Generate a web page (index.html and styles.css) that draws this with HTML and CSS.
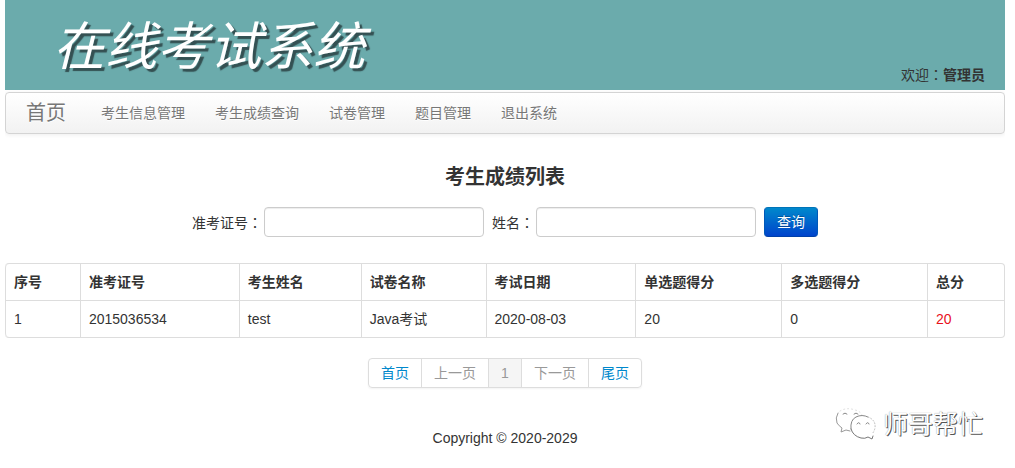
FILE: index.html
```html
<!DOCTYPE html>
<html lang="zh-CN">
<head>
<meta charset="utf-8">
<title>在线考试系统</title>
<link rel="stylesheet" href="styles.css">
</head>
<body>
<header class="banner">
  <h1 class="banner-title">在线考试系统</h1>
  <p class="welcome">欢迎<span class="colon" lang="zh-TW">：</span><strong>管理员</strong></p>
</header>
<nav class="navbar">
  <a class="brand" href="#">首页</a>
  <a class="nav-link" href="#">考生信息管理</a>
  <a class="nav-link" href="#">考生成绩查询</a>
  <a class="nav-link" href="#">试卷管理</a>
  <a class="nav-link" href="#">题目管理</a>
  <a class="nav-link" href="#">退出系统</a>
</nav>
<main>
  <h2 class="page-title">考生成绩列表</h2>
  <form class="search">
    <div class="field">
      <label for="ticket">准考证号<span class="colon" lang="zh-TW">：</span></label>
      <input class="text-input" id="ticket" type="text">
    </div>
    <div class="field">
      <label for="name">姓名<span class="colon" lang="zh-TW">：</span></label>
      <input class="text-input" id="name" type="text">
    </div>
    <button class="btn" type="button">查询</button>
  </form>
  <table class="scores">
    <colgroup>
      <col class="col-index"><col class="col-ticket"><col class="col-name"><col class="col-paper"><col class="col-date"><col class="col-part"><col class="col-part"><col class="col-total">
    </colgroup>
    <thead>
      <tr><th>序号</th><th>准考证号</th><th>考生姓名</th><th>试卷名称</th><th>考试日期</th><th>单选题得分</th><th>多选题得分</th><th>总分</th></tr>
    </thead>
    <tbody>
      <tr><td>1</td><td>2015036534</td><td>test</td><td>Java考试</td><td>2020-08-03</td><td>20</td><td>0</td><td class="total">20</td></tr>
    </tbody>
  </table>
  <nav class="pagination">
    <a class="page" href="#">首页</a>
    <a class="page muted" href="#">上一页</a>
    <a class="page current" href="#">1</a>
    <a class="page muted" href="#">下一页</a>
    <a class="page" href="#">尾页</a>
  </nav>
</main>
<footer class="footer">Copyright © 2020-2029</footer>
<div class="watermark">
  <svg class="wechat" viewBox="0 0 42 32" width="42" height="32" fill="none" stroke-linecap="round">
    <path d="M3 5Q0 10 2 15Q4 18 7 20L6 24L11 22L15 23" stroke="#999"/>
    <path d="M5 3Q12 -1 20 2Q25 3 27 7" stroke="#ddd" stroke-dasharray="1 3"/>
    <path d="M16 21Q15 12 21 9Q27 6 33 9" stroke="#888"/>
    <path d="M33 9Q41 12 40 20Q39 24 37 26" stroke="#bbb" stroke-dasharray="1 2"/>
    <path d="M16 21Q18 28 26 30Q30 31 33 29L37 31L38 28" stroke="#777"/>
    <path d="M8 6Q10 4 12 6M19 6Q21 4 23 6M22 16Q24 13 25 16M31 16Q33 13 34 16" stroke="#888"/>
  </svg>
  <span>师哥帮忙</span>
</div>
</body>
</html>
```
FILE: styles.css
```css
* { box-sizing: border-box; }

body {
  position: relative;
  margin: 0 10px 0 5px;
  background: #fff;
  color: #333;
  font: 14px/20px "Liberation Sans", "Noto Sans CJK SC", sans-serif;
}

a { text-decoration: none; }

.colon { font-family: "Noto Sans CJK TC", sans-serif; }

.banner {
  display: flex;
  justify-content: space-between;
  align-items: flex-end;
  height: 90px;
  padding: 0 20px 5px 48px;
  background: #6babac;
}

.banner-title {
  margin: 0;
  padding-bottom: 8px;
  color: #fff;
  font-size: 52px;
  font-style: italic;
  font-weight: 400;
  line-height: 60px;
  text-shadow: 3px 3px 1px #345052;
}

.welcome { margin: 0; }

.navbar {
  display: flex;
  align-items: center;
  gap: 30px;
  height: 42px;
  margin-top: 2px;
  padding: 0 20px;
  border: 1px solid #d4d4d4;
  border-radius: 4px;
  background: linear-gradient(#fff, #f2f2f2);
  box-shadow: 0 1px 4px rgba(0, 0, 0, 0.07);
}

.brand,
.nav-link {
  color: #777;
  text-shadow: 0 1px 0 #fff;
}

.brand {
  margin-right: 5px;
  font-size: 20px;
}

.page-title {
  margin: 33px 0 20px;
  font-size: 20px;
  line-height: 20px;
  text-align: center;
}

.search {
  display: flex;
  justify-content: center;
  align-items: center;
  gap: 8px;
}

.field {
  display: flex;
  align-items: center;
  gap: 2px;
}

.text-input {
  width: 220px;
  height: 30px;
  padding: 4px 6px;
  border: 1px solid #ccc;
  border-radius: 4px;
  background: #fff;
  color: #555;
  font: inherit;
  box-shadow: inset 0 1px 1px rgba(0, 0, 0, 0.075);
}

.btn {
  height: 30px;
  padding: 4px 12px;
  border: 1px solid;
  border-color: #0074b8 #0058b8 #0040a8;
  border-radius: 4px;
  background: linear-gradient(#08c, #04c);
  color: #fff;
  font: inherit;
  text-shadow: 0 -1px 0 rgba(0, 0, 0, 0.25);
}

.scores {
  width: 100%;
  margin-top: 26px;
  border: 1px solid #ddd;
  border-left: 0;
  border-radius: 4px;
  border-collapse: separate;
  border-spacing: 0;
  table-layout: fixed;
}

.scores th,
.scores td {
  padding: 8px;
  border-left: 1px solid #ddd;
  text-align: left;
}

.scores td { border-top: 1px solid #ddd; }
.scores th:first-child { border-top-left-radius: 4px; }
.scores td:first-child { border-bottom-left-radius: 4px; }
.scores .total { color: #e8101c; }

.col-index { width: 7.5%; }
.col-ticket { width: 15.9%; }
.col-name { width: 12.2%; }
.col-paper { width: 12.5%; }
.col-date { width: 15%; }
.col-part { width: 14.6%; }
.col-total { width: 7.7%; }

.pagination {
  display: flex;
  width: fit-content;
  margin: 20px auto 0;
  overflow: hidden;
  border: 1px solid #ddd;
  border-radius: 4px;
  box-shadow: 0 1px 2px rgba(0, 0, 0, 0.05);
}

.page {
  padding: 4px 12px;
  color: #08c;
}

.page + .page { border-left: 1px solid #ddd; }
.page.muted, .page.current { color: #999; }
.page.current { background: #f5f5f5; }

.footer {
  padding: 40px 0 20px;
  text-align: center;
}

.watermark {
  position: absolute;
  right: 22px;
  bottom: 26px;
  display: flex;
  align-items: center;
  gap: 6px;
  color: #fff;
  font-size: 25px;
  line-height: 36px;
  text-shadow: 1px 1px 0 #555, 0 0 1px #888;
}
```
